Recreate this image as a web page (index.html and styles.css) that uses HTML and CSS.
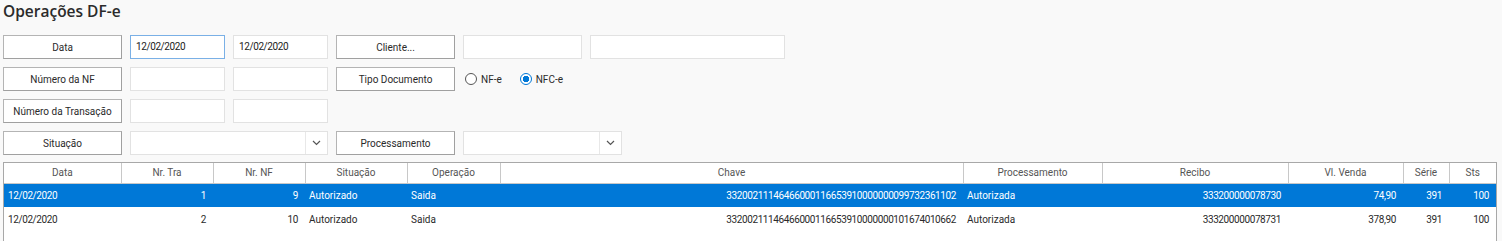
FILE: index.html
```html
<!DOCTYPE html>
<html lang="pt-BR">

<head>
    <meta charset="UTF-8" />
    <title>Operações DF-e</title>
    <link rel="stylesheet" href="styles.css">
</head>

<body>
    <main class="page">
        <h1 class="title">Operações DF-e</h1>

        <div class="filters">
            <button class="label-btn">Data</button>
            <div class="input focused digits">12/02/2020</div>
            <div class="input digits">12/02/2020</div>
            <button class="label-btn">Cliente...</button>
            <div class="input"></div>
            <div class="input"></div>

            <button class="label-btn">Número da NF</button>
            <div class="input"></div>
            <div class="input"></div>
            <button class="label-btn">Tipo Documento</button>
            <div class="radios">
                <label class="radio"><span class="dot"></span>NF-e</label>
                <label class="radio checked"><span class="dot"></span>NFC-e</label>
            </div>

            <button class="label-btn">Número da Transação</button>
            <div class="input"></div>
            <div class="input"></div>
            <div class="empty"></div>

            <button class="label-btn">Situação</button>
            <div class="combo span2">
                <div class="combo-value"></div>
                <div class="combo-arrow">
                    <svg width="9" height="6" viewBox="0 0 9 6"><path d="M1 1l3.5 3.5L8 1" fill="none" stroke="#555" stroke-width="1.2"/></svg>
                </div>
            </div>
            <button class="label-btn">Processamento</button>
            <div class="combo span2 proc">
                <div class="combo-value"></div>
                <div class="combo-arrow">
                    <svg width="9" height="6" viewBox="0 0 9 6"><path d="M1 1l3.5 3.5L8 1" fill="none" stroke="#555" stroke-width="1.2"/></svg>
                </div>
            </div>
        </div>

        <div class="grid">
            <table>
                <colgroup>
                    <col style="width:117px">
                    <col style="width:92px">
                    <col style="width:92px">
                    <col style="width:102px">
                    <col style="width:93px">
                    <col style="width:463px">
                    <col style="width:139px">
                    <col style="width:186px">
                    <col style="width:115px">
                    <col style="width:46px">
                    <col style="width:47px">
                </colgroup>
                <thead>
                    <tr>
                        <th>Data</th>
                        <th>Nr. Tra</th>
                        <th>Nr. NF</th>
                        <th>Situação</th>
                        <th>Operação</th>
                        <th>Chave</th>
                        <th>Processamento</th>
                        <th>Recibo</th>
                        <th>Vl. Venda</th>
                        <th>Série</th>
                        <th>Sts</th>
                    </tr>
                </thead>
                <tbody>
                    <tr class="selected">
                        <td class="digits">12/02/2020</td>
                        <td class="num">1</td>
                        <td class="num">9</td>
                        <td>Autorizado</td>
                        <td>Saida</td>
                        <td class="num">33200211146466000116653910000000099732361102</td>
                        <td>Autorizada</td>
                        <td class="num">333200000078730</td>
                        <td class="num">74,90</td>
                        <td class="num">391</td>
                        <td class="num">100</td>
                    </tr>
                    <tr>
                        <td class="digits">12/02/2020</td>
                        <td class="num">2</td>
                        <td class="num">10</td>
                        <td>Autorizado</td>
                        <td>Saida</td>
                        <td class="num">33200211146466000116653910000000101674010662</td>
                        <td>Autorizada</td>
                        <td class="num">333200000078731</td>
                        <td class="num">378,90</td>
                        <td class="num">391</td>
                        <td class="num">100</td>
                    </tr>
                </tbody>
            </table>
        </div>
    </main>
</body>

</html>
```

FILE: styles.css
```css
* {
    box-sizing: border-box;
    margin: 0;
    padding: 0;
}

body {
    background: #f9f9f9;
    font-family: Roboto, "Liberation Sans", sans-serif;
    font-size: 10px;
    color: #2a2a2a;
    overflow: hidden;
}

.page {
    padding: 0 3px;
}

.title {
    font-family: "Open Sans", "Noto Sans", sans-serif;
    font-size: 15.5px;
    font-weight: 600;
    line-height: 20px;
    color: #2b2b2b;
    padding-top: 1px;
}

.filters {
    display: grid;
    grid-template-columns: 119px 95px 95px 119px 119px 195px;
    grid-auto-rows: 24px;
    gap: 8px;
    margin-top: 14px;
}

.label-btn {
    font: inherit;
    color: #2a2a2a;
    background: #fff;
    white-space: nowrap;
    padding: 0;
    border: 1px solid #b4b4b4;
    border-right-color: #a0a0a0;
    border-bottom-color: #a0a0a0;
}

.input {
    background: #fff;
    border: 1px solid #e2e2e2;
    padding: 0 5px;
    line-height: 22px;
    color: #222;
}

.input.focused {
    border-color: #7ab0e6;
}

.empty {
    grid-column: span 3;
}

.digits,
td.num {
    letter-spacing: -0.4px;
}

.radios {
    display: flex;
    align-items: center;
    gap: 18px;
    padding-left: 2px;
    grid-column: span 2;
}

.radio {
    display: flex;
    align-items: center;
    gap: 4px;
}

.dot {
    width: 12px;
    height: 12px;
    border: 1px solid #555;
    border-radius: 50%;
    background: #fff;
}

.radio.checked .dot {
    border-color: #0078d7;
    background: radial-gradient(circle, #0078d7 0 3px, #fff 3.5px);
}

.combo {
    display: flex;
    background: #fff;
    border: 1px solid #e2e2e2;
}

.span2 {
    grid-column: span 2;
}

.proc {
    width: 159px;
}

.combo-value {
    flex: 1;
}

.combo-arrow {
    width: 22px;
    border-left: 1px solid #e8e8e8;
    display: flex;
    align-items: center;
    justify-content: center;
}

.grid {
    margin-top: 7px;
    width: 1494px;
    height: 100px;
    background: #fff;
    border: 1px solid #a8a8a8;
}

table {
    border-collapse: collapse;
    table-layout: fixed;
    width: 1492px;
}

th {
    font-weight: normal;
    color: #555;
    height: 20px;
    border-right: 1px solid #c8c8c8;
    border-bottom: 1px solid #c8c8c8;
}

th:last-child {
    border-right: 0;
}

td {
    height: 24px;
    padding: 0 4px;
    white-space: nowrap;
    overflow: hidden;
}

td.num {
    text-align: right;
    padding-right: 7px;
}

tr.selected td {
    background: #0078d7;
    color: #fff;
}
```
